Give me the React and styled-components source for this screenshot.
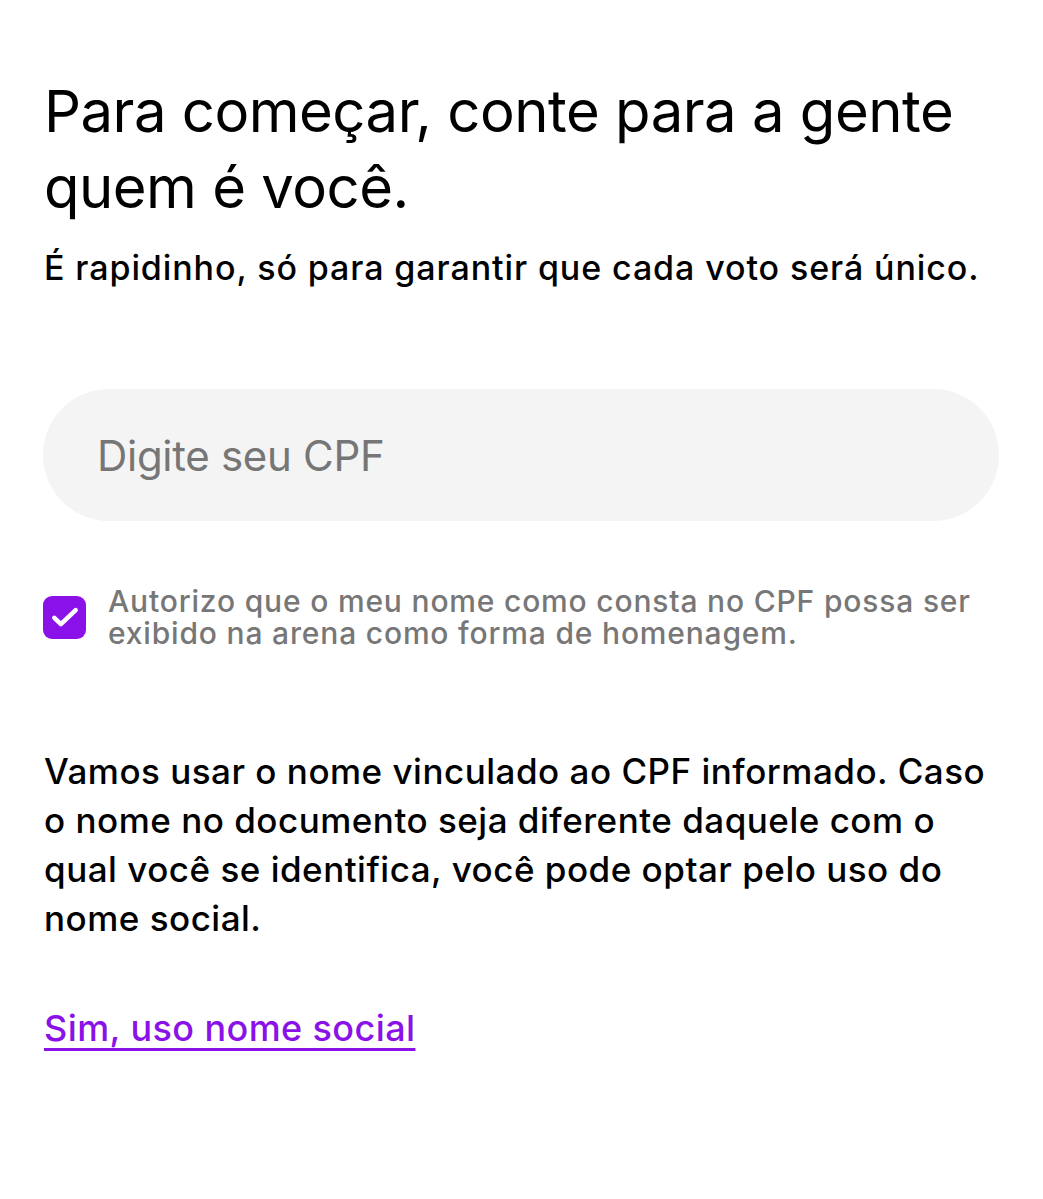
import React, { useState } from 'react';
import styled, { createGlobalStyle } from 'styled-components';

const GlobalStyle = createGlobalStyle`
  html, body {
    margin: 0;
    padding: 0;
    background: #fff;
  }
  body {
    font-family: Inter, "Noto Sans", sans-serif;
    color: #000;
  }
`;

const App = () => {
  const [checked, setChecked] = useState(true);

  return (
    <Page>
      <GlobalStyle />
      <Title>Para começar, conte para a gente quem é você.</Title>
      <Subtitle>É rapidinho, só para garantir que cada voto será único.</Subtitle>

      <CpfInput placeholder='Digite seu CPF' inputMode='numeric' />

      <Consent onClick={() => setChecked(!checked)}>
        <CheckBox $checked={checked}>
          {checked && (
            <svg width='32' height='32' viewBox='0 0 24 24' fill='none'>
              <path d='M4 12.6l4.9 4.7L20 6.8' stroke='#fff' strokeWidth='3.4' strokeLinecap='round' strokeLinejoin='round' />
            </svg>
          )}
        </CheckBox>
        <ConsentText>Autorizo que o meu nome como consta no CPF possa ser exibido na arena como forma de homenagem.</ConsentText>
      </Consent>

      <Info>
        Vamos usar o nome vinculado ao CPF informado. Caso o nome no documento seja diferente daquele com o qual você se identifica, você pode optar pelo uso do nome social.
      </Info>

      <SocialLink href='#'>Sim, uso nome social</SocialLink>
    </Page>
  );
};

export default App;

const Page = styled.div`
  display: flex;
  flex-direction: column;
  align-items: flex-start;
  width: 1043px;
  min-height: 1199px;
  box-sizing: border-box;
  padding: 73px 44px 0 44px;
`;

const Title = styled.h1`
  margin: 0;
  font-size: 58px;
  line-height: 76px;
  font-weight: 400;
  letter-spacing: -0.5px;
  color: #000;
`;

const Subtitle = styled.p`
  margin: 23px 0 0;
  font-size: 34px;
  line-height: 40px;
  font-weight: 500;
  letter-spacing: 0.9px;
  color: #000;
`;

const CpfInput = styled.input`
  align-self: stretch;
  margin: 101px 0 0 -1px;
  height: 132px;
  box-sizing: border-box;
  padding: 0 54px;
  border: none;
  border-radius: 66px;
  background: #f4f4f4;
  font-family: Inter, "Noto Sans", sans-serif;
  font-size: 42px;
  letter-spacing: -0.3px;
  color: #222;
  outline: none;
  &::placeholder {
    color: #767676;
  }
`;

const Consent = styled.label`
  display: flex;
  align-items: center;
  gap: 22px;
  margin-top: 64px;
  cursor: pointer;
`;

const CheckBox = styled.span`
  flex: 0 0 auto;
  display: flex;
  align-items: center;
  justify-content: center;
  width: 43px;
  height: 43px;
  margin-left: -1px;
  border-radius: 9px;
  box-sizing: border-box;
  background: ${(props) => (props.$checked ? '#8a12e8' : '#fff')};
  border: ${(props) => (props.$checked ? 'none' : '2px solid #999')};
`;

const ConsentText = styled.span`
  max-width: 885px;
  font-size: 30px;
  line-height: 32px;
  font-weight: 500;
  letter-spacing: 0.82px;
  color: #777;
`;

const Info = styled.p`
  max-width: 955px;
  margin: 98px 0 0;
  font-size: 35px;
  line-height: 49px;
  font-weight: 500;
  letter-spacing: 0.5px;
  color: #000;
`;

const SocialLink = styled.a`
  margin-top: 63px;
  font-size: 36px;
  line-height: 44px;
  font-weight: 500;
  letter-spacing: 0.4px;
  color: #8a12e8;
  text-decoration: underline;
  text-underline-offset: 7px;
  text-decoration-thickness: 3px;
`;
